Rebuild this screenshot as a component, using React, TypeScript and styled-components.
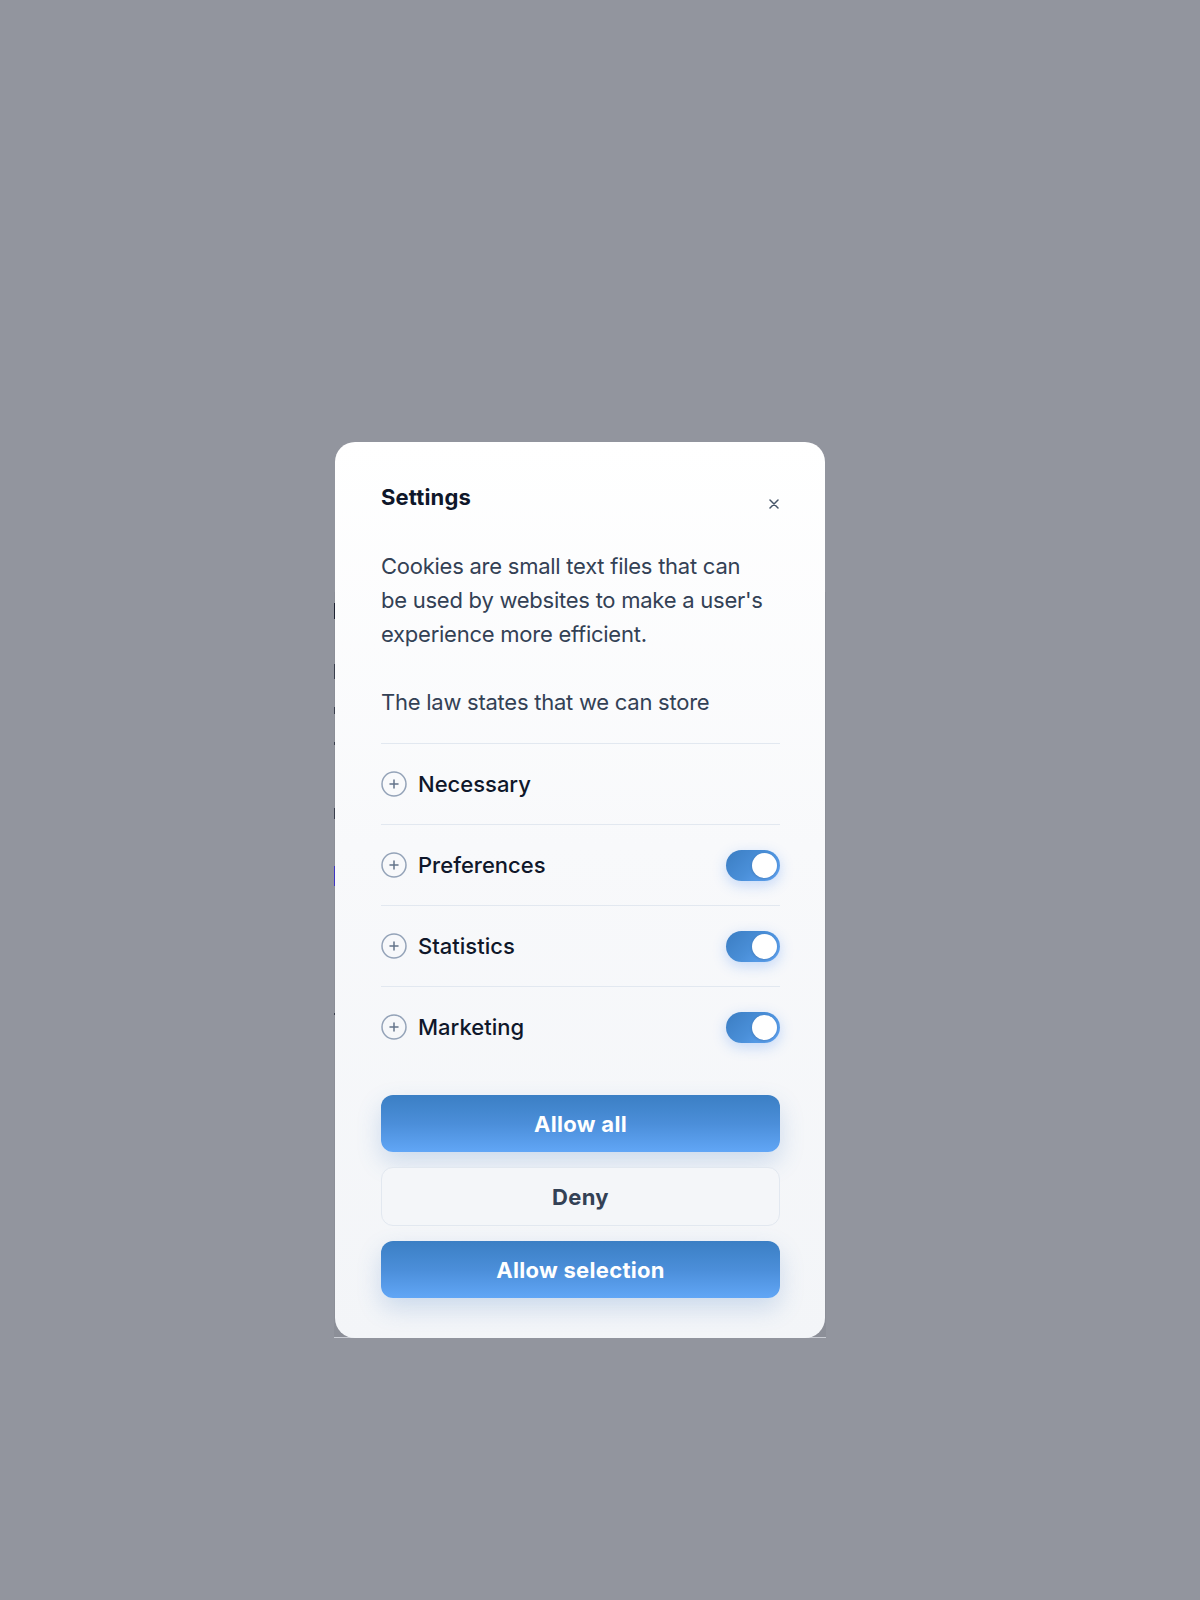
import React from "react";
import styled, { createGlobalStyle } from "styled-components";

const GlobalStyle = createGlobalStyle`
  * { box-sizing: border-box; }
  html, body { margin: 0; padding: 0; }
  body {
    background: #92959e;
    font-family: Inter, "Noto Sans", "Liberation Sans", sans-serif;
    -webkit-font-smoothing: antialiased;
  }
`;

const Page = styled.div`
  min-height: 1600px;
  display: flex;
  align-items: flex-start;
  padding: 442px 0 0 335px;
`;

const DialogFrame = styled.div`
  position: relative;

  &::before {
    content: "";
    position: absolute;
    z-index: 0;
    left: -1px;
    right: -1px;
    top: 150px;
    bottom: 0;
    background-color: #8c8f98;
    background-image: linear-gradient(
      to bottom,
      transparent 11px,
      #1e2333 11px, #1e2333 27px,
      transparent 27px, transparent 72px,
      #3a3f4d 72px, #3a3f4d 87px,
      transparent 87px, transparent 115px,
      #3a3f4d 115px, #3a3f4d 122px,
      transparent 122px, transparent 150px,
      #3a3f4d 150px, #3a3f4d 153px,
      transparent 153px, transparent 216px,
      #3a3f4d 216px, #3a3f4d 227px,
      transparent 227px, transparent 274px,
      #3f35c4 274px, #3f35c4 294px,
      transparent 294px, transparent 421px,
      #3a3f4d 421px, #3a3f4d 423px,
      transparent 423px
    );
    background-size: 1px 100%;
    background-repeat: no-repeat;
    border-bottom: 1px solid #c9ccd3;
  }
`;

const Dialog = styled.div`
  position: relative;
  z-index: 1;
  width: 490px;
  border-radius: 20px;
  padding: 41px 45px 40px 46px;
  background: linear-gradient(180deg, #ffffff 0%, #f8f9fb 45%, #f3f5f8 100%);
  display: flex;
  flex-direction: column;
`;

const Header = styled.div`
  display: flex;
  justify-content: space-between;
  align-items: flex-start;
`;

const Title = styled.h2`
  margin: 0;
  font-size: 22px;
  line-height: 28px;
  font-weight: 700;
  color: #0f172a;
  letter-spacing: 0.15px;
`;

const CloseButton = styled.button`
  border: 0;
  background: transparent;
  padding: 0;
  margin: 15px 0 0 0;
  width: 12px;
  height: 12px;
  display: flex;
  align-items: center;
  justify-content: center;
  cursor: pointer;
`;

const Description = styled.div`
  margin-top: 38px;
  display: flex;
  flex-direction: column;
  gap: 34px;
`;

const Paragraph = styled.p`
  margin: 0;
  max-width: 386px;
  font-size: 22px;
  line-height: 34px;
  font-weight: 400;
  letter-spacing: -0.25px;
  color: #334155;
`;

const CategoryList = styled.ul`
  list-style: none;
  margin: 24px 0 0;
  padding: 0;
`;

const CategoryRow = styled.li`
  height: 81px;
  border-top: 1px solid #e2e8f0;
  display: flex;
  align-items: center;
  justify-content: space-between;
`;

const CategoryLabel = styled.div`
  display: flex;
  align-items: center;
  gap: 11px;
  font-size: 22px;
  font-weight: 500;
  color: #0f172a;
`;

const Toggle = styled.span`
  width: 54px;
  height: 31px;
  border-radius: 16px;
  padding: 3px;
  display: flex;
  justify-content: flex-end;
  background: linear-gradient(135deg, #3b7dc2 0%, #4a8fd8 50%, #62a6f6 100%);
  box-shadow: 0 4px 14px rgba(59, 130, 246, 0.28);
`;

const Knob = styled.span`
  width: 25px;
  height: 25px;
  border-radius: 50%;
  background: #ffffff;
  box-shadow: 0 1px 3px rgba(15, 23, 42, 0.2);
`;

const Actions = styled.div`
  margin-top: 28px;
  display: flex;
  flex-direction: column;
  gap: 15px;
`;

const PrimaryButton = styled.button`
  height: 57px;
  border: 0;
  border-radius: 12px;
  background: linear-gradient(180deg, #3b7fc4 0%, #4b8ed9 50%, #61a6f6 100%);
  box-shadow: 0 10px 24px rgba(59, 120, 190, 0.22);
  color: #ffffff;
  font-family: inherit;
  font-size: 22px;
  font-weight: 700;
  letter-spacing: 0.3px;
  cursor: pointer;
`;

const SecondaryButton = styled.button`
  height: 59px;
  border: 1px solid #e2e8f0;
  border-radius: 12px;
  background: #f4f6f9;
  color: #334155;
  font-family: inherit;
  font-size: 22px;
  font-weight: 700;
  letter-spacing: 0.3px;
  cursor: pointer;
`;

const PlusIcon = () => (
  <svg width="26" height="26" viewBox="0 0 26 26" fill="none">
    <circle cx="13" cy="13" r="12" stroke="#94a3b8" strokeWidth="1.5" />
    <path d="M13 9v8M9 13h8" stroke="#64748b" strokeWidth="1.5" strokeLinecap="round" />
  </svg>
);

const CloseIcon = () => (
  <svg width="10" height="10" viewBox="0 0 10 10" fill="none">
    <path d="M1 1l8 8M9 1L1 9" stroke="#475569" strokeWidth="1.5" strokeLinecap="round" />
  </svg>
);

const categories = [
  { name: "Necessary", toggle: false },
  { name: "Preferences", toggle: true },
  { name: "Statistics", toggle: true },
  { name: "Marketing", toggle: true },
];

export default function App() {
  return (
    <>
      <GlobalStyle />
      <Page>
        <DialogFrame>
          <Dialog>
            <Header>
              <Title>Settings</Title>
              <CloseButton aria-label="Close">
                <CloseIcon />
              </CloseButton>
            </Header>
            <Description>
              <Paragraph>
                Cookies are small text files that can be used by websites to make a user's experience more
                efficient.
              </Paragraph>
              <Paragraph>The law states that we can store</Paragraph>
            </Description>
            <CategoryList>
              {categories.map((c) => (
                <CategoryRow key={c.name}>
                  <CategoryLabel>
                    <PlusIcon />
                    {c.name}
                  </CategoryLabel>
                  {c.toggle && (
                    <Toggle>
                      <Knob />
                    </Toggle>
                  )}
                </CategoryRow>
              ))}
            </CategoryList>
            <Actions>
              <PrimaryButton>Allow all</PrimaryButton>
              <SecondaryButton>Deny</SecondaryButton>
              <PrimaryButton>Allow selection</PrimaryButton>
            </Actions>
          </Dialog>
        </DialogFrame>
      </Page>
    </>
  );
}
